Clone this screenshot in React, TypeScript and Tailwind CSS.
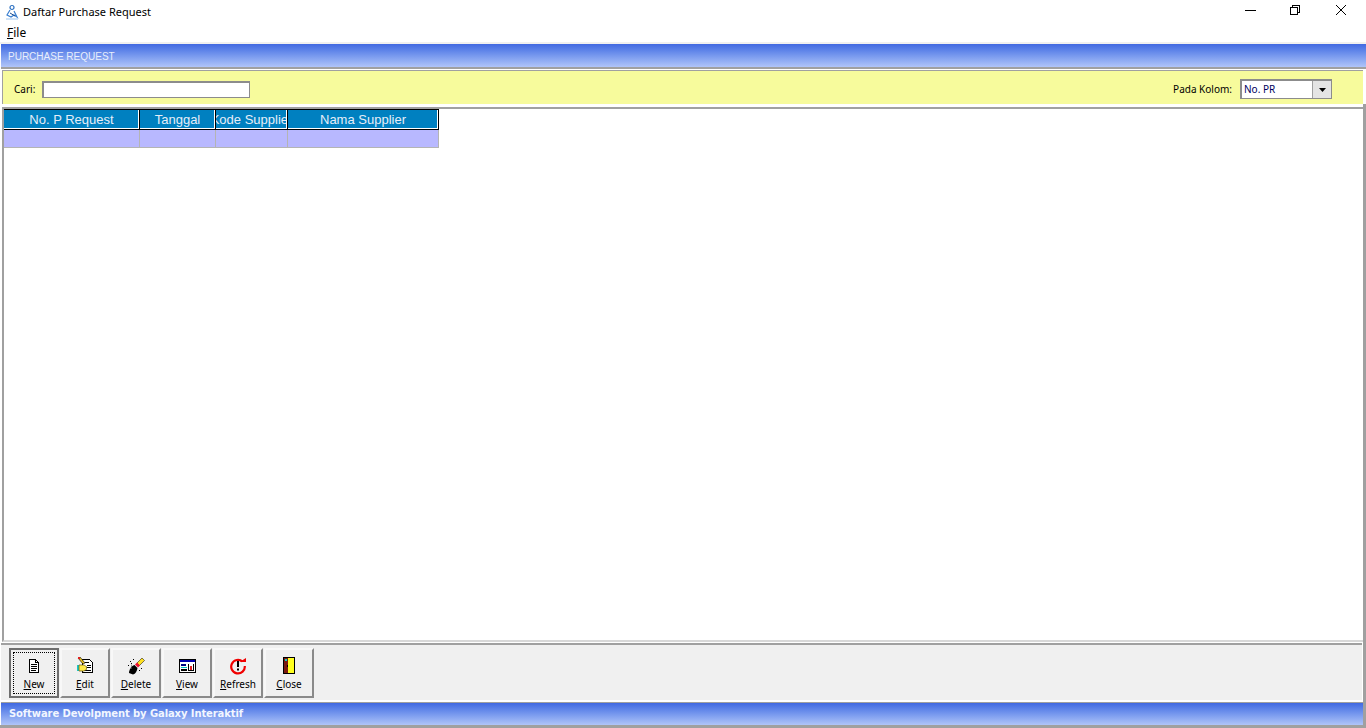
const sans = "font-['Liberation_Sans',Arial,sans-serif]";
const ui = "font-['Noto_Sans',Tahoma,sans-serif]";

const AppIcon = () => (
  <svg width="16" height="16" viewBox="0 0 16 16" fill="none">
    <circle cx="8" cy="3.5" r="2" stroke="#2a6fc0" strokeWidth="1.2" />
    <path d="M6 6 3 11l4 2 3-2 3 2-3-6" stroke="#3a7fd0" strokeWidth="1.2" />
    <path d="M2 15h12" stroke="#9cc4ee" strokeWidth="1" />
    <path d="M6 9l5 3" stroke="#1f4f90" strokeWidth="1" />
  </svg>
);

const NewIcon = () => (
  <svg width="18" height="18" viewBox="0 0 18 18" shapeRendering="crispEdges">
    <path d="M4.5 2.5h6l3 3v10h-9z" fill="#fff" stroke="#000" />
    <path d="M10.5 2.5v3h3" fill="none" stroke="#000" />
    <path d="M6 7.5h6M6 9.5h6M6 11.5h6M6 13.5h5" stroke="#000" />
  </svg>
);

const EditIcon = () => (
  <svg width="18" height="18" viewBox="0 0 18 18">
    <path d="M6.5 2.5h7l3 3v10h-10z" fill="#fff" stroke="#000" shapeRendering="crispEdges" />
    <path d="M9 5.5h4M11 8.5h4M11 10.5h4M8 13.5h7" stroke="#000" shapeRendering="crispEdges" />
    <rect x="1" y="8" width="2" height="6" fill="#19c8c8" />
    <path d="M3 8h5l3 2-1 1 1 1-3 2H3z" fill="#ffe94a" stroke="#6a5a10" strokeWidth="0.7" />
    <path d="M2 1l2-1 5 6-2 1z" fill="#e8c020" stroke="#000" strokeWidth="0.6" />
    <rect x="2" y="0" width="2" height="2" fill="#e02020" />
  </svg>
);

const DeleteIcon = () => (
  <svg width="18" height="18" viewBox="0 0 18 18">
    <path d="M10 6 15 1l2.5 2.5-5 5z" fill="#ffe020" stroke="#000" strokeWidth="0.5" />
    <path d="M8 7.5l2-2 3 3-2 2z" fill="#f01030" />
    <path d="M2 16c0-3 2-7 5.5-8l3 3c-.5 3-2 6-4.5 6.500z" fill="#000" />
    <path d="M5 6c-1 2-1.500 4-1 6" stroke="#fff" strokeWidth="0.5" />
    <path d="M3 4h1v1H3zM6 2h1v1H6zM1 8h1v1H1zM4 6h1v1H4zM12 13h1v1h-1zM14 11h1v1h-1z" fill="#000" />
  </svg>
);

const ViewIcon = () => (
  <svg width="17" height="14" viewBox="0 0 17 14" shapeRendering="crispEdges">
    <rect x="0.5" y="0.5" width="16" height="13" fill="#fff" stroke="#000" />
    <rect x="1" y="1" width="15" height="2" fill="#0000b0" />
    <rect x="2" y="5" width="5" height="2" fill="#000080" />
    <rect x="2" y="8" width="6" height="1" fill="#00c0c0" />
    <rect x="2" y="10" width="6" height="2" fill="#000" />
    <path d="M9.500 5v6.500h5V5" fill="none" stroke="#000" />
    <rect x="11" y="7" width="2" height="4" fill="#e02020" />
  </svg>
);

const RefreshIcon = () => (
  <svg width="18" height="18" viewBox="0 0 18 18">
    <path d="M13.500 4.500A6.800 6.800 0 1 0 15.800 9" fill="none" stroke="#f00000" strokeWidth="2.200" />
    <path d="M10.500 5h6.500V1z" fill="#f00000" />
    <rect x="8" y="4" width="2" height="6" fill="#000" />
    <rect x="8" y="11.500" width="2" height="2" fill="#000" />
  </svg>
);

const CloseIcon = () => (
  <svg width="12" height="17" viewBox="0 0 12 17" shapeRendering="crispEdges">
    <rect x="0" y="0" width="12" height="17" fill="#000" />
    <rect x="1" y="1" width="4" height="15" fill="#7a1a10" />
    <rect x="5" y="1" width="6" height="15" fill="#ffff20" />
    <rect x="2" y="2" width="2" height="2" fill="#19c8c8" />
    <rect x="4" y="8" width="1" height="2" fill="#000" />
  </svg>
);

const buttons = [
  { label: "New", key: "N", rest: "ew", icon: <NewIcon />, focused: true },
  { label: "Edit", key: "E", rest: "dit", icon: <EditIcon /> },
  { label: "Delete", key: "D", rest: "elete", icon: <DeleteIcon /> },
  { label: "View", key: "V", rest: "iew", icon: <ViewIcon /> },
  { label: "Refresh", key: "R", rest: "efresh", icon: <RefreshIcon /> },
  { label: "Close", key: "C", rest: "lose", icon: <CloseIcon /> },
];

const columns = [
  { name: "No. P Request", width: "w-[136px]" },
  { name: "Tanggal", width: "w-[76px]" },
  { name: "Kode Supplier", width: "w-[72px]" },
  { name: "Nama Supplier", width: "w-[151px]" },
];

const GradientBar = ({ children, className }: { children: React.ReactNode; className: string }) => (
  <div className={`flex items-center bg-gradient-to-b from-[#4169e1] to-[#b0c4f8] pl-2 ${className}`}>{children}</div>
);

export default function App() {
  return (
    <div className={`flex h-[728px] w-[1366px] flex-col overflow-hidden bg-white ${ui}`}>
      <div className="flex h-[24px] shrink-0 items-center bg-white pl-[4px] text-[11px] text-black">
        <AppIcon />
        <span className="ml-[3px] flex-1">Daftar Purchase Request</span>
        <div className="flex items-center pr-[6px]">
          <svg width="45" height="24" viewBox="0 0 45 24"><path d="M0 10.500h11" stroke="#000" /></svg>
          <svg width="45" height="24" viewBox="0 0 45 24" shapeRendering="crispEdges" fill="none" stroke="#000">
            <rect x="0.500" y="7.500" width="7" height="7" />
            <path d="M2.500 7.500v-2h7v7h-2" />
          </svg>
          <svg width="25" height="24" viewBox="0 0 25 24" stroke="#000" fill="none"><path d="M1 5l10 10M11 5 1 15" /></svg>
        </div>
      </div>
      <div className="flex h-[18px] shrink-0 items-center bg-white pl-[7px] text-[12px] text-black">
        <span><span className="underline">F</span>ile</span>
      </div>
      <div className="flex min-h-0 flex-1 flex-col border-t-[2px] border-b-[3px] border-t-[#f0f0f0] border-b-[#a0a0a0] bg-white pl-[1px]">
        <GradientBar className="h-[23px] shrink-0 pt-[2px] text-[10px] text-[#e8eefc]">
          <span className={`-translate-x-px ${sans}`}>PURCHASE REQUEST</span>
        </GradientBar>
        <div className="h-[2px] shrink-0 bg-[#a0a0a0]" />
        <div className="mr-[3px] mt-[1px] ml-[1px] flex h-[34px] shrink-0 items-center justify-between border-l-[1px] border-t-[1px] border-[#a0a0a0] bg-[#f7fb9c] pl-[11px] pr-[31px] pt-[3px] text-[10px] text-black">
          <div className="flex items-center">
            <span>Cari:</span>
            <div className="ml-[7px] h-[17px] w-[208px] border border-t-[2px] border-l-[2px] border-[#8c8c8c] bg-white" />
          </div>
          <div className="flex items-center">
            <span className="-translate-x-px">Pada Kolom:</span>
            <div className="ml-[7px] flex h-[20px] w-[92px] items-center justify-between border border-t-[2px] border-l-[2px] border-[#8c8c8c] bg-white pl-[2px] text-[#000060]">
              <span>No. PR</span>
              <div className="flex h-full w-[19px] items-center justify-center border-l border-[#a0a0a0] bg-[#e4e4e4]">
                <svg width="7" height="4" viewBox="0 0 7 4"><path d="M0 0h7L3.500 4z" fill="#000" /></svg>
              </div>
            </div>
          </div>
        </div>
        <div className="flex min-h-0 flex-1 flex-col border-r-[3px] border-r-[#a0a0a0]">
          <div className="mt-[3px] ml-[1px] min-h-0 flex-1 border-t-[2px] border-l-[2px] border-b-[2px] border-t-[#a0a0a0] border-l-[#a0a0a0] border-b-[#d8d8d8] bg-white">
            <div className={`flex h-[21px] w-fit text-[13px] text-[#e6eef8] ${sans}`}>
              {columns.map((col) => (
                <div key={col.name} className={`flex ${col.width} border-t border-r border-b border-black`}>
                  <div className="flex flex-1 items-center justify-center overflow-hidden whitespace-nowrap border-r border-b border-white bg-[#0080c0] pl-[1px] pt-[1px]">
                    {col.name}
                  </div>
                </div>
              ))}
            </div>
            <div className="flex h-[18px] w-fit bg-[#b8b8ff]">
              {columns.map((col) => (
                <div key={col.name} className={`${col.width} border-r border-b border-[#b4b4b4]`} />
              ))}
            </div>
          </div>
          <div className="mt-[1px] mr-[1px] flex h-[59px] shrink-0 items-center gap-[1px] border-t-[2px] border-b-[2px] border-t-[#a0a0a0] border-b-white bg-[#f0f0f0] pl-[8px] text-[10px] text-black">
            {buttons.map((b) => (
              <div
                key={b.label}
                className={`relative flex h-[50px] w-[50px] flex-col items-center justify-between border-[2px] pb-[4px] pt-[6px] ${b.focused ? "border-[#6e6e6e]" : "border-t-[#f8f8f8] border-l-[#f8f8f8] border-r-[#8a8a8a] border-b-[#8a8a8a]"}`}
              >
                {b.focused && <div className="absolute inset-[2px] border border-dotted border-black" />}
                <div className="flex h-[20px] items-center">{b.icon}</div>
                <span><span className="underline">{b.key}</span>{b.rest}</span>
              </div>
            ))}
          </div>
          <div className="h-[1px] shrink-0 bg-[#a0a0a0]" />
          <GradientBar className="h-[22px] shrink-0 text-[10px] font-bold tracking-[-0.1px] text-[#f2f6ff]">
            <span className="-translate-y-px font-['DejaVu_Sans',sans-serif]">Software Devolpment by Galaxy Interaktif</span>
          </GradientBar>
        </div>
      </div>
    </div>
  );
}
